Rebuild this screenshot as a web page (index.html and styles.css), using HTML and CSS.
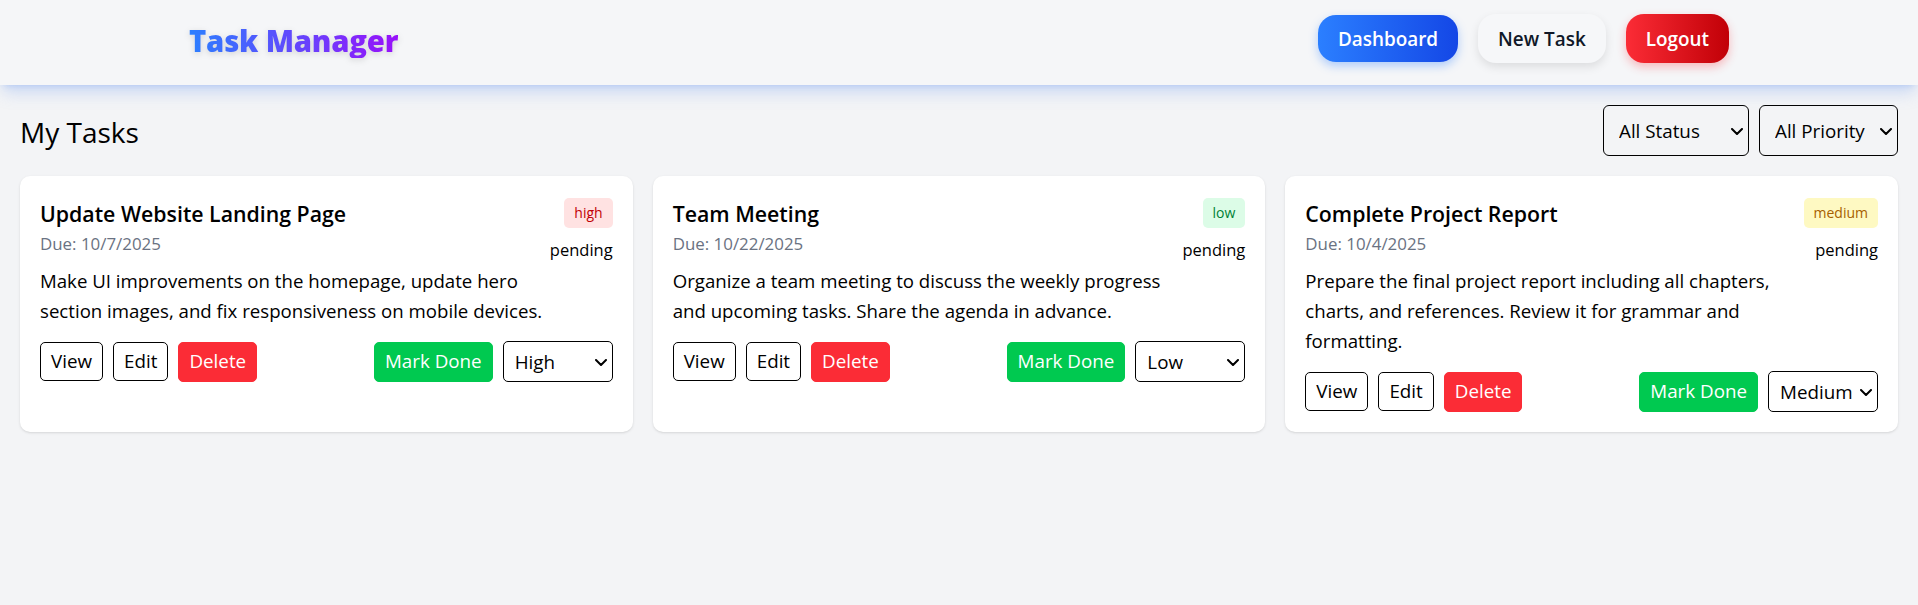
FILE: index.html
```html
<!DOCTYPE html>
<html lang="en">
<head>
<meta charset="utf-8">
<title>Task Manager</title>
<link rel="stylesheet" href="styles.css">
</head>
<body>
<header class="navbar">
  <div class="brand">Task Manager</div>
  <nav class="nav-links">
    <a class="nav-btn nav-btn--primary" href="#">Dashboard</a>
    <a class="nav-btn nav-btn--light" href="#">New Task</a>
    <button class="nav-btn nav-btn--danger" type="button">Logout</button>
  </nav>
</header>
<main class="main">
  <div class="page-head">
    <h1 class="page-title">My Tasks</h1>
    <div class="filters">
      <label class="select-wrap">
        <select class="filter-select filter-select--status">
          <option>All Status</option>
          <option>Pending</option>
          <option>Completed</option>
        </select>
        <svg class="chevron" width="12" height="7" viewBox="0 0 12 7"><polyline points="1,1 6,6 11,1" fill="none" stroke="#000" stroke-width="2" stroke-linecap="round" stroke-linejoin="round"/></svg>
      </label>
      <label class="select-wrap">
        <select class="filter-select filter-select--priority">
          <option>All Priority</option>
          <option>High</option>
          <option>Medium</option>
          <option>Low</option>
        </select>
        <svg class="chevron" width="12" height="7" viewBox="0 0 12 7"><polyline points="1,1 6,6 11,1" fill="none" stroke="#000" stroke-width="2" stroke-linecap="round" stroke-linejoin="round"/></svg>
      </label>
    </div>
  </div>
  <div class="task-grid">
    <article class="task-card">
      <div class="task-body">
        <div class="task-info">
          <h3 class="task-title">Update Website Landing Page</h3>
          <p class="task-due">Due: 10/7/2025</p>
          <p class="task-desc">Make UI improvements on the homepage, update hero section images, and fix responsiveness on mobile devices.</p>
        </div>
        <div class="task-meta">
          <span class="badge badge--high">high</span>
          <span class="task-status">pending</span>
        </div>
      </div>
      <div class="task-actions">
        <div class="btn-group">
          <button class="btn btn--outline" type="button">View</button>
          <button class="btn btn--outline" type="button">Edit</button>
          <button class="btn btn--danger" type="button">Delete</button>
        </div>
        <div class="btn-group">
          <button class="btn btn--success" type="button">Mark Done</button>
          <label class="select-wrap">
            <select class="card-select">
              <option>Low</option>
              <option>Medium</option>
              <option selected>High</option>
            </select>
            <svg class="chevron" width="12" height="7" viewBox="0 0 12 7"><polyline points="1,1 6,6 11,1" fill="none" stroke="#000" stroke-width="2" stroke-linecap="round" stroke-linejoin="round"/></svg>
          </label>
        </div>
      </div>
    </article>
    <article class="task-card">
      <div class="task-body">
        <div class="task-info">
          <h3 class="task-title">Team Meeting</h3>
          <p class="task-due">Due: 10/22/2025</p>
          <p class="task-desc">Organize a team meeting to discuss the weekly progress and upcoming tasks. Share the agenda in advance.</p>
        </div>
        <div class="task-meta">
          <span class="badge badge--low">low</span>
          <span class="task-status">pending</span>
        </div>
      </div>
      <div class="task-actions">
        <div class="btn-group">
          <button class="btn btn--outline" type="button">View</button>
          <button class="btn btn--outline" type="button">Edit</button>
          <button class="btn btn--danger" type="button">Delete</button>
        </div>
        <div class="btn-group">
          <button class="btn btn--success" type="button">Mark Done</button>
          <label class="select-wrap">
            <select class="card-select">
              <option selected>Low</option>
              <option>Medium</option>
              <option>High</option>
            </select>
            <svg class="chevron" width="12" height="7" viewBox="0 0 12 7"><polyline points="1,1 6,6 11,1" fill="none" stroke="#000" stroke-width="2" stroke-linecap="round" stroke-linejoin="round"/></svg>
          </label>
        </div>
      </div>
    </article>
    <article class="task-card">
      <div class="task-body">
        <div class="task-info">
          <h3 class="task-title">Complete Project Report</h3>
          <p class="task-due">Due: 10/4/2025</p>
          <p class="task-desc">Prepare the final project report including all chapters, charts, and references. Review it for grammar and formatting.</p>
        </div>
        <div class="task-meta">
          <span class="badge badge--medium">medium</span>
          <span class="task-status">pending</span>
        </div>
      </div>
      <div class="task-actions">
        <div class="btn-group">
          <button class="btn btn--outline" type="button">View</button>
          <button class="btn btn--outline" type="button">Edit</button>
          <button class="btn btn--danger" type="button">Delete</button>
        </div>
        <div class="btn-group">
          <button class="btn btn--success" type="button">Mark Done</button>
          <label class="select-wrap">
            <select class="card-select">
              <option>Low</option>
              <option selected>Medium</option>
              <option>High</option>
            </select>
            <svg class="chevron" width="12" height="7" viewBox="0 0 12 7"><polyline points="1,1 6,6 11,1" fill="none" stroke="#000" stroke-width="2" stroke-linecap="round" stroke-linejoin="round"/></svg>
          </label>
        </div>
      </div>
    </article>
  </div>
</main>
</body>
</html>
```

FILE: styles.css
```css
* {
  box-sizing: border-box;
}

html,
body {
  margin: 0;
  padding: 0;
}

body {
  background: #f3f4f6;
  color: #000;
  font-family: "Open Sans", "Noto Sans", sans-serif;
  min-height: 605px;
}

.navbar {
  position: relative;
  z-index: 1;
  display: flex;
  align-items: center;
  justify-content: space-between;
  height: 85px;
  padding: 0 189px;
  background: #f5f6f8;
  box-shadow: 0 10px 15px -3px rgba(120, 160, 240, 0.35),
    0 4px 6px -4px rgba(120, 160, 240, 0.35);
}

.brand {
  font-size: 29.3px;
  font-weight: 800;
  line-height: 1;
  letter-spacing: -0.2px;
  background: linear-gradient(90deg, #2b7fff, #9810fa);
  -webkit-background-clip: text;
  background-clip: text;
  color: transparent;
  filter: drop-shadow(0 2px 3px rgba(0, 0, 0, 0.14));
  padding-bottom: 2px;
}

.nav-links {
  display: flex;
  align-items: center;
  gap: 20px;
  margin-top: -8px;
}

.nav-btn {
  display: inline-flex;
  align-items: center;
  justify-content: center;
  height: 47px;
  padding: 0 20px;
  border: 0;
  border-radius: 18px;
  font-family: inherit;
  font-size: 18.9px;
  font-weight: 600;
  text-decoration: none;
  cursor: pointer;
}

.nav-btn--primary {
  color: #fff;
  background: linear-gradient(90deg, #2b7fff, #1447e6);
  box-shadow: 0 4px 10px rgba(43, 127, 255, 0.35);
}

.nav-btn--light {
  height: 49px;
  color: #101828;
  background: #f6f7f9;
  box-shadow: 0 4px 10px rgba(0, 0, 0, 0.1);
}

.nav-btn--danger {
  height: 49px;
  color: #fff;
  background: linear-gradient(90deg, #fb2c36, #c10007);
  box-shadow: 0 4px 10px rgba(251, 44, 54, 0.3);
}

.main {
  padding: 20px;
}

.page-head {
  display: flex;
  align-items: center;
  justify-content: space-between;
  margin-bottom: 20px;
}

.page-title {
  margin: 0;
  font-size: 28px;
  font-weight: 400;
  line-height: 36px;
  padding-top: 3px;
}

.filters {
  display: flex;
  gap: 10px;
}

.select-wrap {
  position: relative;
  display: inline-flex;
}

.chevron {
  position: absolute;
  right: 6px;
  top: 50%;
  margin-top: -3px;
  pointer-events: none;
}

.filter-select {
  -webkit-appearance: none;
  appearance: none;
  height: 51px;
  padding: 0 20px 0 15px;
  border: 1px solid #000;
  border-radius: 6px;
  background: transparent;
  color: #000;
  font-family: inherit;
  font-size: 18.8px;
}

.filter-select--status {
  width: 146px;
}

.filter-select--priority {
  width: 139px;
}

.task-grid {
  display: grid;
  grid-template-columns: repeat(3, 1fr);
  gap: 20px;
}

.task-card {
  background: #fff;
  border-radius: 10px;
  padding: 20px;
  box-shadow: 0 1px 3px rgba(0, 0, 0, 0.1), 0 1px 2px -1px rgba(0, 0, 0, 0.1);
}

.task-body {
  display: flex;
  align-items: flex-start;
}

.task-info {
  flex: 1;
  min-width: 0;
}

.task-title {
  margin: 0;
  font-size: 21.3px;
  font-weight: 600;
  line-height: 35px;
}

.task-due {
  margin: 0;
  font-size: 16.9px;
  line-height: 25px;
  color: #6a7282;
}

.task-desc {
  margin: 10px 0 0;
  font-size: 18.65px;
  line-height: 30px;
}

.task-meta {
  display: flex;
  flex-direction: column;
  align-items: flex-end;
  gap: 9px;
  padding-top: 2px;
}

.badge {
  display: inline-block;
  padding: 5px 10px;
  border-radius: 5px;
  font-size: 14px;
  line-height: 20px;
}

.badge--high {
  background: #ffe2e2;
  color: #c10007;
}

.badge--low {
  background: #dcfce7;
  color: #008236;
}

.badge--medium {
  background: #fef9c2;
  color: #a65f00;
}

.task-status {
  font-size: 16.5px;
  line-height: 25px;
}

.task-actions {
  display: flex;
  align-items: center;
  justify-content: space-between;
  margin-top: 15px;
}

.btn-group {
  display: flex;
  align-items: center;
  gap: 10px;
}

.btn {
  height: 39px;
  padding: 0 10px;
  border: 1px solid #000;
  border-radius: 5px;
  background: #fff;
  color: #000;
  font-family: inherit;
  font-size: 18.8px;
  line-height: 27px;
  cursor: pointer;
}

.btn--danger {
  height: 40px;
  border-color: #fb2c36;
  background: #fb2c36;
  color: #fff;
}

.btn--success {
  height: 40px;
  border-color: #00c950;
  background: #00c950;
  color: #fff;
}

.card-select {
  -webkit-appearance: none;
  appearance: none;
  width: 110px;
  height: 41px;
  padding: 0 20px 0 11px;
  border: 1px solid #000;
  border-radius: 5px;
  background: #fff;
  color: #000;
  font-family: inherit;
  font-size: 18.8px;
}
```
